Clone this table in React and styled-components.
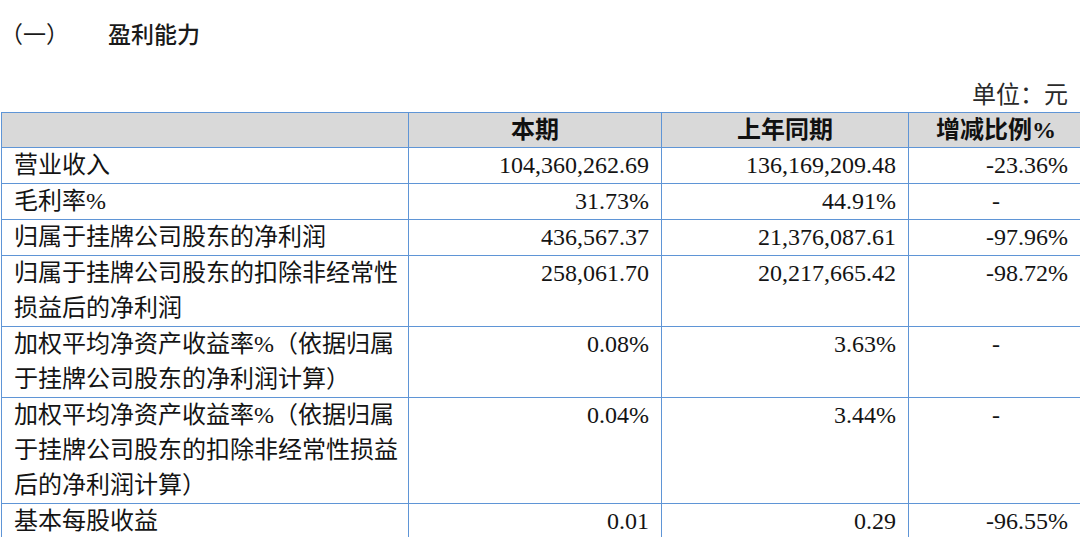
import styled, { createGlobalStyle } from "styled-components";

const GlobalStyle = createGlobalStyle`
    html, body {
        margin: 0;
        padding: 0;
        overflow: hidden;
        background: #ffffff;
    }
    body {
        font-family: "Liberation Serif", "Noto Sans CJK SC", serif;
        color: #141414;
    }
`

const Page = styled.div`
    width: 1080px;
    display: flex;
    flex-direction: column;
`

const Title = styled.h2`
    margin: 0;
    padding-top: 10px;
    display: flex;
    align-items: center;
    font-family: "Noto Sans CJK SC", sans-serif;
    font-size: 23px;
    font-weight: 500;
    line-height: 46px;
    color: #1a1a1a;
`

const TitleNo = styled.span`
    width: 108px;
    font-weight: 400;
`

const Unit = styled.div`
    margin-top: 22px;
    padding-right: 12px;
    text-align: right;
    font-size: 24px;
    line-height: 34px;
    color: #2a2a2a;
`

const Table = styled.table`
    width: 1082px;
    margin-left: 1px;
    border-collapse: collapse;
    table-layout: fixed;
    font-size: 24px;
`

const HeadCell = styled.th`
    background: #d9d9d9;
    border: 1px solid #5f95d6;
    padding: 0;
    line-height: 34px;
    font-family: "Liberation Serif", "Noto Sans CJK SC", serif;
    font-weight: 700;
    text-align: center;
    color: #111;
`

const Cell = styled.td`
    border: 1px solid #5f95d6;
    padding: ${(props) => (props.$align === "left" ? "0 8px 0 12px" : "0 12px")};
    padding-right: ${(props) => props.$last && props.$align === "right" && "15px"};
    line-height: 35px;
    vertical-align: top;
    white-space: nowrap;
    text-align: ${(props) => props.$align};
`

const rows = [
    { label: ["营业收入"], cur: "104,360,262.69", prev: "136,169,209.48", chg: "-23.36%" },
    { label: ["毛利率%"], cur: "31.73%", prev: "44.91%", chg: "-" },
    { label: ["归属于挂牌公司股东的净利润"], cur: "436,567.37", prev: "21,376,087.61", chg: "-97.96%" },
    { label: ["归属于挂牌公司股东的扣除非经常性", "损益后的净利润"], cur: "258,061.70", prev: "20,217,665.42", chg: "-98.72%" },
    { label: ["加权平均净资产收益率%（依据归属", "于挂牌公司股东的净利润计算）"], cur: "0.08%", prev: "3.63%", chg: "-" },
    {
        label: ["加权平均净资产收益率%（依据归属", "于挂牌公司股东的扣除非经常性损益", "后的净利润计算）"],
        cur: "0.04%",
        prev: "3.44%",
        chg: "-",
    },
    { label: ["基本每股收益"], cur: "0.01", prev: "0.29", chg: "-96.55%" },
]

const App = () => {
    return (
        <Page>
            <GlobalStyle />
            <Title>
                <TitleNo>（一）</TitleNo>
                盈利能力
            </Title>
            <Unit>单位：元</Unit>
            <Table>
                <colgroup>
                    <col style={{ width: "407px" }} />
                    <col style={{ width: "253px" }} />
                    <col style={{ width: "247px" }} />
                    <col style={{ width: "175px" }} />
                </colgroup>
                <thead>
                    <tr>
                        <HeadCell></HeadCell>
                        <HeadCell>本期</HeadCell>
                        <HeadCell>上年同期</HeadCell>
                        <HeadCell>增减比例%</HeadCell>
                    </tr>
                </thead>
                <tbody>
                    {rows.map((r, i) => (
                        <tr key={i}>
                            <Cell $align="left">
                                {r.label.map((line, j) => (
                                    <div key={j}>{line}</div>
                                ))}
                            </Cell>
                            <Cell $align="right">{r.cur}</Cell>
                            <Cell $align="right">{r.prev}</Cell>
                            <Cell $align={r.chg === "-" ? "center" : "right"} $last>
                                {r.chg}
                            </Cell>
                        </tr>
                    ))}
                </tbody>
            </Table>
        </Page>
    )
}

export default App
